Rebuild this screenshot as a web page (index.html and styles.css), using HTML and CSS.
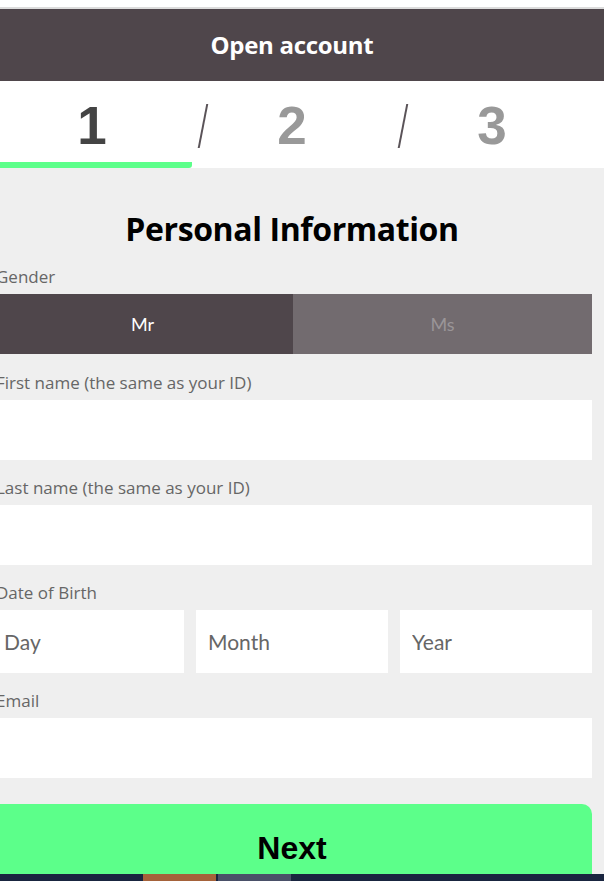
FILE: index.html
```html
<!DOCTYPE html>
<html lang="en">
<head>
<meta charset="utf-8">
<title>Open account</title>
<link rel="stylesheet" href="styles.css">
</head>
<body>
<div class="topline"></div>
<header class="appbar">
  <h1 class="appbar-title">Open account</h1>
</header>
<nav class="steps">
  <div class="steps-inner">
    <div class="step active"><span class="step-num">1</span></div>
    <div class="step"><span class="slash"></span><span class="step-num">2</span></div>
    <div class="step"><span class="slash"></span><span class="step-num">3</span></div>
  </div>
</nav>
<main class="content">
  <form class="form">
    <h2 class="form-title">Personal Information</h2>
    <div class="field field-gender">
      <label class="label">Gender</label>
      <div class="toggle">
        <button type="button" class="toggle-btn on">Mr</button>
        <button type="button" class="toggle-btn off">Ms</button>
      </div>
    </div>
    <div class="field">
      <label class="label">First name (the same as your ID)</label>
      <input class="input" type="text">
    </div>
    <div class="field">
      <label class="label">Last name (the same as your ID)</label>
      <input class="input" type="text">
    </div>
    <div class="field">
      <label class="label">Date of Birth</label>
      <div class="dob">
        <input class="input tall" type="text" placeholder="Day">
        <input class="input tall" type="text" placeholder="Month">
        <input class="input tall" type="text" placeholder="Year">
      </div>
    </div>
    <div class="field">
      <label class="label">Email</label>
      <input class="input" type="email">
    </div>
    <button type="button" class="next">Next</button>
  </form>
</main>
<div class="bottombar">
  <span class="seg seg-orange"></span>
  <span class="seg seg-blue"></span>
</div>
</body>
</html>
```
FILE: styles.css
```css
html, body {
  margin: 0;
  padding: 0;
  overflow: hidden;
}
body {
  background: #efefef;
  font-family: "Open Sans", Lato, sans-serif;
  color: #000;
}
.topline {
  height: 7px;
  background: #fff;
  border-bottom: 2px solid #dcdcdc;
}
.appbar {
  height: 72px;
  background: #4f464b;
  display: flex;
  align-items: center;
  justify-content: center;
}
.appbar-title {
  margin: 0 0 0 -20px;
  color: #fff;
  font-family: "Open Sans", sans-serif;
  font-weight: 700;
  font-size: 24px;
  line-height: 30px;
  letter-spacing: -0.3px;
}
.steps {
  background: #fff;
  height: 87px;
}
.steps-inner {
  width: 600px;
  margin-left: -8px;
  display: grid;
  grid-template-columns: repeat(3, 1fr);
  height: 100%;
}
.step {
  display: grid;
  grid-template-columns: 1fr auto 1fr;
  align-items: center;
  height: 100%;
  box-sizing: border-box;
  border-bottom: 6px solid transparent;
  padding-top: 8px;
}
.step.active {
  border-bottom-color: #5cff8a;
  border-bottom-right-radius: 3px;
}
.step-num {
  grid-column: 2;
  grid-row: 1;
  font-family: "Liberation Sans", Arial, sans-serif;
  font-weight: 700;
  font-size: 53px;
  line-height: 1;
  color: #999;
}
.step.active .step-num {
  color: #444;
}
.slash {
  grid-column: 1;
  grid-row: 1;
  justify-self: start;
  margin-left: 10px;
  width: 2px;
  height: 44px;
  background: #5a5358;
  transform: skewX(-11deg);
}
.content {
  width: 600px;
  margin-left: -8px;
}
.form {
  padding-top: 43px;
  display: flex;
  flex-direction: column;
}
.form-title {
  margin: 0 0 21px;
  text-align: center;
  font-family: "Open Sans", sans-serif;
  font-weight: 700;
  font-size: 32px;
  line-height: 36px;
  letter-spacing: -0.4px;
}
.field {
  margin-bottom: 19px;
  display: flex;
  flex-direction: column;
}
.field-gender {
  margin-bottom: 20px;
}
.label {
  display: block;
  padding-left: 4px;
  font-family: "Open Sans", sans-serif;
  font-size: 17px;
  line-height: 18px;
  color: #666;
  margin-bottom: 8px;
}
.toggle {
  display: grid;
  grid-template-columns: 301px 1fr;
  height: 60px;
}
.toggle-btn {
  border: 0;
  margin: 0;
  font-family: Lato, sans-serif;
  font-size: 18px;
  cursor: pointer;
}
.toggle-btn.on {
  background: #4f464b;
  color: #fff;
}
.toggle-btn.off {
  background: #726b6f;
  color: #9a9598;
}
.input {
  display: block;
  box-sizing: border-box;
  width: 100%;
  height: 60px;
  border: 0;
  margin: 0;
  background: #fff;
  padding: 0 12px;
  font-family: Lato, sans-serif;
  font-size: 21px;
  color: #333;
  outline: none;
}
.input.tall {
  height: 63px;
}
.input::placeholder {
  color: #666;
}
.dob {
  display: grid;
  grid-template-columns: repeat(3, 1fr);
  gap: 12px;
}
.next {
  margin-top: 7px;
  height: 84px;
  border: 0;
  border-top-right-radius: 10px;
  background: #5cff8a;
  font-family: "Liberation Sans", Arial, sans-serif;
  font-weight: 700;
  font-size: 32px;
  color: #000;
  padding-top: 5px;
}
.bottombar {
  position: fixed;
  left: 0;
  right: 0;
  bottom: 0;
  height: 7px;
  background: #19253f;
  display: flex;
  padding-left: 143px;
  gap: 2px;
}
.seg {
  width: 73px;
  height: 100%;
}
.seg-orange { background: #a5623a; }
.seg-blue { background: #4a5068; }
```
